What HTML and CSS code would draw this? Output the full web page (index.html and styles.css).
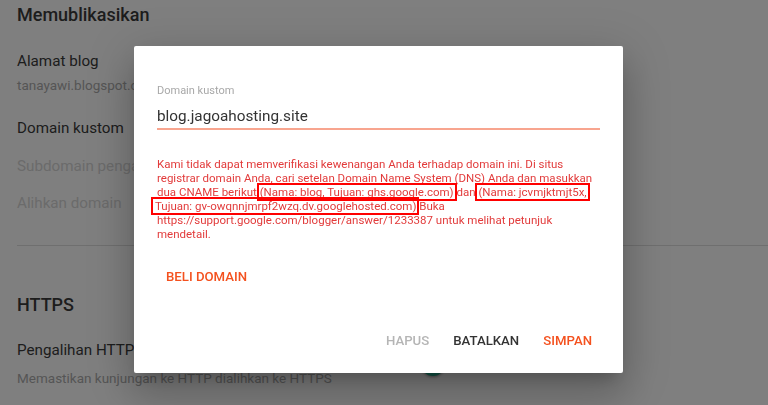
FILE: index.html
```html
<!DOCTYPE html>
<html lang="id">
<head>
<meta charset="utf-8">
<title>Memublikasikan</title>
<link rel="stylesheet" href="styles.css">
</head>
<body>
<div class="page">
  <section class="section section-publish">
    <h2 class="section-title">Memublikasikan</h2>
    <div class="item item-first">
      <div class="item-title">Alamat blog</div>
      <div class="item-sub">tanayawi.blogspot.com</div>
    </div>
    <div class="item item-gap">
      <div class="item-title">Domain kustom</div>
    </div>
    <div class="item item-close">
      <div class="item-title item-disabled">Subdomain pengalihan</div>
    </div>
    <div class="item item-close">
      <div class="item-title item-disabled">Alihkan domain</div>
    </div>
  </section>
  <hr class="divider">
  <section class="section section-https">
    <h2 class="section-title">HTTPS</h2>
    <div class="item item-row">
      <div class="item-text">
        <div class="item-title">Pengalihan HTTPS</div>
        <div class="item-sub item-sub-tight">Memastikan kunjungan ke HTTP dialihkan ke HTTPS</div>
      </div>
      <div class="toggle"><span class="toggle-knob"></span></div>
    </div>
  </section>
</div>

<div class="scrim"></div>

<div class="dialog" role="dialog">
  <div class="field">
    <label class="field-label">Domain kustom</label>
    <div class="field-input">blog.jagoahosting.site</div>
  </div>
  <p class="error">Kami tidak dapat memverifikasi kewenangan Anda terhadap domain ini. Di situs<br>registrar domain Anda, cari setelan Domain Name System (DNS) Anda dan masukkan<br>dua CNAME berikut <span class="mark">(Nama: blog, Tujuan: ghs.google.com)</span> dan <span class="mark">(Nama: jcvmjktmjt5x,</span><br><span class="mark mark-start">Tujuan: gv-owqnnjmrpf2wzq.dv.googlehosted.com)</span> Buka<br>https://support.google.com/blogger/answer/1233387 untuk melihat petunjuk<br>mendetail.</p>
  <div class="buy">
    <button class="btn btn-accent">BELI DOMAIN</button>
  </div>
  <div class="actions">
    <button class="btn btn-disabled">HAPUS</button>
    <button class="btn btn-plain">BATALKAN</button>
    <button class="btn btn-accent">SIMPAN</button>
  </div>
</div>
</body>
</html>
```

FILE: styles.css
```css
* { box-sizing: border-box; }

html, body {
  margin: 0;
  padding: 0;
  width: 768px;
  height: 405px;
  overflow: hidden;
  background: #ffffff;
  font-family: Roboto, "Noto Sans", Arial, sans-serif;
}

.page {
  padding: 3px 0 0 17px;
}

.section-title {
  margin: 0;
  font-size: 18px;
  line-height: 24px;
  font-weight: 500;
  color: #3a3a3a;
}

.item-title {
  font-size: 15.2px;
  line-height: 20px;
  color: #3a3a3a;
}

.item-disabled {
  color: #d6d6d6;
}

.item-sub {
  margin-top: 4px;
  font-size: 13.5px;
  line-height: 20px;
  color: #ababab;
  white-space: nowrap;
}

.item-sub-tight {
  margin-top: 8px;
}

.item-first { margin-top: 24px; }
.item-gap { margin-top: 23px; }
.item-close { margin-top: 17.5px; }

.divider {
  margin: 32px 0 0 0;
  border: 0;
  height: 1px;
  background: #dedede;
}

.section-https {
  margin-top: 47px;
}

.section-https .item-row {
  margin-top: 23px;
  width: 428px;
  display: flex;
  justify-content: space-between;
  align-items: flex-start;
}

.toggle {
  margin-top: 12px;
  width: 28px;
  height: 24px;
  display: flex;
  justify-content: flex-end;
}

.toggle-knob {
  width: 24px;
  height: 24px;
  border-radius: 50%;
  background: #23a88c;
  box-shadow: 0 1px 3px rgba(0,0,0,.4);
}

.scrim {
  position: fixed;
  inset: 0;
  background: rgba(0, 0, 0, 0.5);
}

.dialog {
  position: absolute;
  left: 134px;
  top: 46px;
  width: 489px;
  height: 327px;
  background: #ffffff;
  border-radius: 2px;
  padding: 38px 23px 16px 23px;
  display: flex;
  flex-direction: column;
  box-shadow: 0 11px 15px -7px rgba(0,0,0,.2), 0 24px 38px 3px rgba(0,0,0,.14), 0 9px 46px 8px rgba(0,0,0,.12);
}

.field-label {
  display: block;
  font-size: 11px;
  line-height: 13px;
  color: #a8a8a8;
}

.field-input {
  margin-top: 9px;
  font-size: 15.3px;
  line-height: 20px;
  color: #333333;
  padding-bottom: 2px;
  border-bottom: 2px solid #f8a58f;
}

.error {
  margin: 27px 0 0 0;
  font-size: 11.5px;
  line-height: 14px;
  color: #e23b3b;
  white-space: nowrap;
}

.mark {
  border: 2px solid #ff0000;
  padding: 0 1px;
  margin: 0 -3px;
}

.mark-start {
  margin-left: -6px;
  padding-left: 2px;
}

.buy {
  margin-top: 20px;
}

.btn {
  font-family: Roboto, "Noto Sans", Arial, sans-serif;
  font-size: 13.2px;
  line-height: 16px;
  font-weight: 500;
  background: none;
  border: 0;
  padding: 8px;
  margin: 0;
  cursor: pointer;
}

.buy .btn {
  padding-left: 9px;
}

.btn-accent { color: #f4511e; }
.btn-plain { color: #333333; }
.btn-disabled { color: #b5b5b5; }

.actions {
  margin-top: auto;
  display: flex;
  justify-content: flex-end;
  gap: 8px;
}
```
